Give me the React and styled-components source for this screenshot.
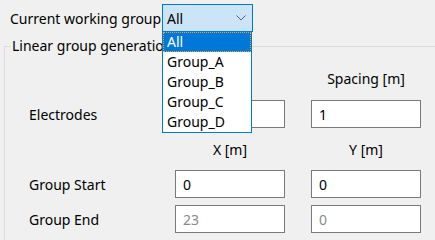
import styled, { createGlobalStyle } from 'styled-components';

const Global = createGlobalStyle`
  html, body { margin: 0; padding: 0; background: #f0f0f0; overflow: hidden; }
  body { font-family: "Noto Sans", "Open Sans", sans-serif; font-size: 14px; color: #000; }
`;

const Page = styled.div`width: 435px; height: 240px; overflow: hidden;`;

const TopBar = styled.div`display: flex; align-items: center; padding: 4px 0 0 10px; height: 28px;`;
const TopLabel = styled.span`width: 152px; white-space: nowrap;`;

const Combo = styled.div`
  position: relative; width: 79px; height: 26px; border: 1px solid #0078d7; background: #cce4f7;
  display: flex; align-items: center; justify-content: space-between; padding: 0 6px 0 4px;
`;

const DropList = styled.ul`
  position: absolute; top: 26px; left: -1px; z-index: 5; margin: 0; padding: 0; list-style: none;
  width: 88px; border: 1px solid #0078d7; background: #fff;
`;

const Item = styled.li`
  height: 20px; line-height: 18px; padding: 0 3px; box-sizing: border-box;
  background: ${p => (p.$active ? '#0078d7' : '#fff')};
  color: ${p => (p.$active ? '#fff' : '#000')};
  border: 1px dotted ${p => (p.$active ? '#f0a030' : 'transparent')};
`;

const Box = styled.fieldset`
  margin: 6px 0 0 4px; padding: 0; width: 460px; height: 260px; box-sizing: border-box;
  border: 1px solid #dcdcdc; border-right: none;
`;
const Legend = styled.legend`padding: 0 2px; margin-left: 5px; line-height: 16px;`;

const Body = styled.div`padding-left: 24px;`;

const Row = styled.div`
  display: grid; grid-template-columns: 120px 110px 110px; column-gap: 26px; align-items: center;
  height: ${p => p.$h}px; margin-top: ${p => p.$mt}px;
`;
const Head = styled.div`text-align: center;`;
const Label = styled.div``;
const Input = styled.div`
  height: 28px; box-sizing: border-box; border: 1px solid #7a7a7a; background: #fff;
  display: flex; align-items: center; padding-left: 7px; color: ${p => (p.$disabled ? '#8a8a8a' : '#000')};
`;

const groups = ['All', 'Group_A', 'Group_B', 'Group_C', 'Group_D'];

export default function App() {
  return (
    <Page>
      <Global />
      <TopBar>
        <TopLabel>Current working group</TopLabel>
        <Combo>
          <span>All</span>
          <svg width="10" height="6" viewBox="0 0 10 6">
            <path d="M0.5 0.5 L5 5 L9.5 0.5" fill="none" stroke="#606060" strokeWidth="1" />
          </svg>
          <DropList>
            {groups.map((g, i) => (
              <Item key={g} $active={i === 0}>{g}</Item>
            ))}
          </DropList>
        </Combo>
      </TopBar>
      <Box>
        <Legend>Linear group generation</Legend>
        <Body>
          <Row $h={20} $mt={14}>
            <span />
            <Head />
            <Head>Spacing [m]</Head>
          </Row>
          <Row $h={28} $mt={12}>
            <Label>Electrodes</Label>
            <Input />
            <Input>1</Input>
          </Row>
          <Row $h={20} $mt={11}>
            <span />
            <Head>X [m]</Head>
            <Head>Y [m]</Head>
          </Row>
          <Row $h={28} $mt={11}>
            <Label>Group Start</Label>
            <Input>0</Input>
            <Input>0</Input>
          </Row>
          <Row $h={28} $mt={7}>
            <Label>Group End</Label>
            <Input $disabled>23</Input>
            <Input $disabled>0</Input>
          </Row>
        </Body>
      </Box>
    </Page>
  );
}
